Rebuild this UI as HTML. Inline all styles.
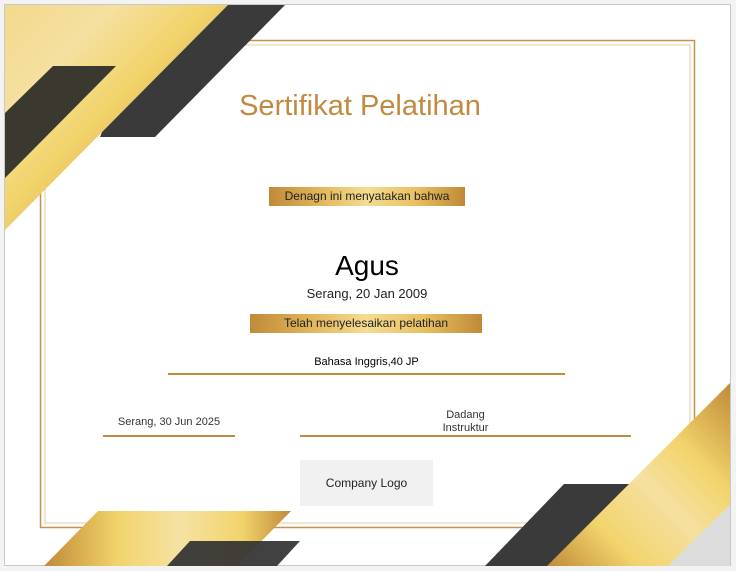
<!DOCTYPE html>
<html><head><style>
body{margin:0;width:736px;height:571px;background:#f3f3f3;position:relative;overflow:hidden;font-family:"Liberation Sans","DejaVu Sans",sans-serif}
.page{position:absolute;left:4px;top:4px;width:727px;height:562px;background:#fff;border:1px solid #c8c8c8;box-sizing:border-box}
.t{position:absolute;white-space:nowrap;text-align:center}
.ban{position:absolute;background:linear-gradient(90deg,#c08a38,#e0b458 25%,#f5dc90 50%,#e8c060 75%,#c08a38);color:#222;font-size:12px;text-align:center;line-height:19px}
.ln{position:absolute;height:2px;background:#c08a3c}
</style></head><body>
<div class="page"></div>
<svg width="736" height="571" style="position:absolute;left:0;top:0">
<defs>
<linearGradient id="g1" x1="0" y1="0" x2="1" y2="1">
<stop offset="0" stop-color="#f3d98e"/><stop offset="0.25" stop-color="#f5e0a0"/><stop offset="0.45" stop-color="#f2d46c"/><stop offset="0.7" stop-color="#dab055"/><stop offset="1" stop-color="#c08a38"/></linearGradient>
<linearGradient id="g2" x1="0" y1="0" x2="1" y2="0">
<stop offset="0" stop-color="#c08a38"/><stop offset="0.3" stop-color="#f2d46c"/><stop offset="0.55" stop-color="#f5e2a4"/><stop offset="0.8" stop-color="#f2d46c"/><stop offset="1" stop-color="#c08a38"/></linearGradient>
<linearGradient id="g3" x1="1" y1="0" x2="0" y2="1">
<stop offset="0" stop-color="#c08a38"/><stop offset="0.3" stop-color="#f2d46c"/><stop offset="0.5" stop-color="#f5e0a0"/><stop offset="0.75" stop-color="#f2d46c"/><stop offset="1" stop-color="#c08a38"/></linearGradient>
</defs>
<rect x="40.5" y="40.5" width="654" height="487" fill="none" stroke="#c8914a" stroke-width="1.5"/>
<rect x="45" y="45" width="645" height="478" fill="none" stroke="#e2c8a6" stroke-width="1"/>
<polygon points="153,5 285,5 155,137 100,137" fill="#3a3a3a"/>
<polygon points="5,5 228,5 5,230" fill="url(#g1)"/>
<polygon points="53,66 116,66 5,178 5,113" fill="#3b3830"/>
<polygon points="564,484 640,484 560,566 485,566" fill="#3a3a3a"/>
<polygon points="730,383 730,505 668,566 547,566" fill="url(#g3)"/>
<polygon points="730,505 730,566 668,566" fill="#dcdcdc"/>
<polygon points="98,511 291,511 237,566 44,566" fill="url(#g2)"/>
<polygon points="190,541 300,541 277,566 167,566" fill="#333" fill-opacity="0.93"/>
</svg>
<div class="t" style="left:0;width:720px;top:90px;font-size:29px;color:#c08a40">Sertifikat Pelatihan</div>
<div class="ban" style="left:269px;top:187px;width:196px">Denagn ini menyatakan bahwa</div>
<div class="t" style="left:0;width:734px;top:250px;font-size:28px;color:#000">Agus</div>
<div class="t" style="left:0;width:734px;top:286px;font-size:13px;color:#222">Serang, 20 Jan 2009</div>
<div class="ban" style="left:250px;top:314px;width:232px">Telah menyelesaikan pelatihan</div>
<div class="t" style="left:168px;width:397px;top:356px;font-size:11px;color:#000">Bahasa Inggris,40 JP</div>
<div class="ln" style="left:168px;top:373px;width:397px"></div>
<div class="t" style="left:103px;width:132px;top:416px;font-size:11px;color:#333">Serang, 30 Jun 2025</div>
<div class="ln" style="left:103px;top:435px;width:132px"></div>
<div class="t" style="left:300px;width:331px;top:409px;font-size:11px;color:#333;line-height:13px">Dadang<br>Instruktur</div>
<div class="ln" style="left:300px;top:435px;width:331px"></div>
<div style="position:absolute;left:300px;top:460px;width:133px;height:46px;background:#f1f1f1;font-size:12px;line-height:46px;text-align:center;color:#222">Company Logo</div>
</body></html>
